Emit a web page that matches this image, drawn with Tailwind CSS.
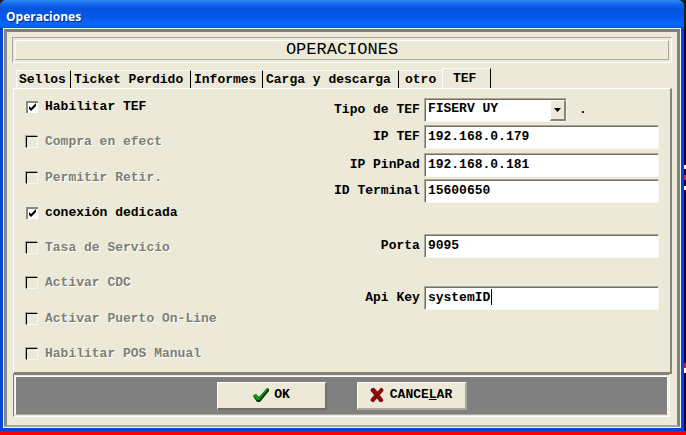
<!DOCTYPE html>
<html lang="es">
<head>
<meta charset="utf-8">
<title>Operaciones</title>
<script src="https://cdn.jsdelivr.net/npm/@tailwindcss/browser@4"></script>
</head>
<body class="min-h-screen flex flex-col bg-[#f00] pb-1 text-black text-[13px] leading-4 font-bold font-['Liberation_Mono',monospace]">
<div class="grow flex flex-col pr-[2px] bg-[linear-gradient(#1c1c10_0_30px,#04045c_30px_165px,#fff_165px_169px,#04045c_169px_175px,#b03060_175px_180px,#04045c_180px_186px,#fff_186px_190px,#04045c_190px_363px,#a02060_363px_368px,#fff_368px_373px,#04045c_373px)]">
  <div class="grow flex flex-col bg-[#0a44d4] px-1 pb-1 rounded-t-md">
    <header class="-mx-1 h-[29px] flex items-center pl-[6px] pt-1 rounded-t-md bg-[linear-gradient(#2f8cf8_0,#1567ee_4px,#0453dd_9px,#0459ea_17px,#0866fc_24px,#0460f4_27px,#0340c0_29px)]">
      <h1 class="text-white text-[12px] font-['Open_Sans',sans-serif] [text-shadow:1px_1px_0_#0a2a80]">Operaciones</h1>
    </header>
    <main class="grow flex flex-col bg-[#ece9d8] border-t-3 border-x-3 border-b-2 border-t-[#7c8084] border-l-[#84888c] border-r-[#84827c] border-b-[#aca899] outline outline-[#f4f4ee] pt-[5px] px-[5px] pb-2">
      <div class="border border-[#aca899] border-r-white border-b-white p-[2px] h-[26px]">
        <h2 class="h-full border border-white border-r-[#aca899] border-b-[#aca899] flex items-center justify-center text-[17px] leading-4 font-normal">OPERACIONES</h2>
      </div>
      <div role="tablist" class="flex items-end h-[25px] pl-1 shrink-0">
        <button role="tab" class="h-[18px] w-[55px] pl-[2px] text-left whitespace-nowrap border-t border-l border-r border-t-white border-l-white border-r-black">Sellos</button>
        <button role="tab" class="h-[18px] w-[120px] pl-[3px] text-left whitespace-nowrap border-t border-r border-t-white border-r-black">Ticket Perdido</button>
        <button role="tab" class="h-[18px] w-[72px] pl-[3px] text-left whitespace-nowrap border-t border-r border-t-white border-r-black">Informes</button>
        <button role="tab" class="h-[18px] w-[136px] pl-[3px] text-left whitespace-nowrap border-t border-r border-t-white border-r-black">Carga y descarga</button>
        <button role="tab" class="h-[18px] w-[43px] pl-[6px] text-left whitespace-nowrap border-t border-t-white">otro</button>
        <button role="tab" aria-selected="true" class="-mb-px h-[21px] w-[49px] pl-[10px] text-left whitespace-nowrap bg-[#ece9d8] border-t border-l border-r border-t-white border-l-white border-r-black">TEF</button>
      </div>
      <section role="tabpanel" class="grow flex border border-t-white border-l-white border-r-2 border-b-2 border-r-[#86837a] border-b-[#86837a] ml-px">
        <div class="flex flex-col justify-between pt-[10px] pb-[10px] pl-3 w-[48%]">
          <label class="flex items-center gap-[7px]"><span class="grid size-3"><input type="checkbox" checked class="peer [grid-area:1/1] appearance-none size-3 bg-white border-t-2 border-l-2 border-t-[#8a887c] border-l-[#8a887c]"><svg viewBox="0 0 12 12" class="[grid-area:1/1] size-3 pointer-events-none invisible peer-checked:visible" aria-hidden="true"><path d="M3 5v3l2 2 5-5V2L5 7z"/></svg></span>Habilitar TEF</label>
          <label class="flex items-center gap-[7px] text-[#807e74] [text-shadow:1px_1px_0_#fff]"><input type="checkbox" disabled class="appearance-none size-3 border border-t-black border-l-black border-r-[#f8f7f0] border-b-[#f8f7f0] shadow-[-1px_-1px_0_#aca899]">Compra en efect</label>
          <label class="flex items-center gap-[7px] text-[#807e74] [text-shadow:1px_1px_0_#fff]"><input type="checkbox" disabled class="appearance-none size-3 border border-t-black border-l-black border-r-[#f8f7f0] border-b-[#f8f7f0] shadow-[-1px_-1px_0_#aca899]">Permitir Retir.</label>
          <label class="flex items-center gap-[7px]"><span class="grid size-3"><input type="checkbox" checked class="peer [grid-area:1/1] appearance-none size-3 bg-white border-t-2 border-l-2 border-t-[#8a887c] border-l-[#8a887c]"><svg viewBox="0 0 12 12" class="[grid-area:1/1] size-3 pointer-events-none invisible peer-checked:visible" aria-hidden="true"><path d="M3 5v3l2 2 5-5V2L5 7z"/></svg></span>conexión dedicada</label>
          <label class="flex items-center gap-[7px] text-[#807e74] [text-shadow:1px_1px_0_#fff]"><input type="checkbox" disabled class="appearance-none size-3 border border-t-black border-l-black border-r-[#f8f7f0] border-b-[#f8f7f0] shadow-[-1px_-1px_0_#aca899]">Tasa de Servicio</label>
          <label class="flex items-center gap-[7px] text-[#807e74] [text-shadow:1px_1px_0_#fff]"><input type="checkbox" disabled class="appearance-none size-3 border border-t-black border-l-black border-r-[#f8f7f0] border-b-[#f8f7f0] shadow-[-1px_-1px_0_#aca899]">Activar CDC</label>
          <label class="flex items-center gap-[7px] text-[#807e74] [text-shadow:1px_1px_0_#fff]"><input type="checkbox" disabled class="appearance-none size-3 border border-t-black border-l-black border-r-[#f8f7f0] border-b-[#f8f7f0] shadow-[-1px_-1px_0_#aca899]">Activar Puerto On-Line</label>
          <label class="flex items-center gap-[7px] text-[#807e74] [text-shadow:1px_1px_0_#fff]"><input type="checkbox" disabled class="appearance-none size-3 border border-t-black border-l-black border-r-[#f8f7f0] border-b-[#f8f7f0] shadow-[-1px_-1px_0_#aca899]">Habilitar POS Manual</label>
        </div>
        <form id="tef" class="grow pt-[9px] pr-[11px] flex flex-col">
          <div class="flex items-center gap-1">
            <label for="tipo" class="w-[91px] text-right">Tipo de TEF</label>
            <div class="relative w-[143px]">
              <select id="tipo" class="block appearance-none w-full h-6 pl-[3px] pb-[2px] bg-white border border-t-[#aca899] border-l-[#aca899] border-r-[#f8f7f0] border-b-[#f8f7f0] shadow-[inset_1px_1px_0_#716f64]"><option>FISERV UY</option></select>
              <span class="absolute right-px top-[2px] bottom-px w-4 bg-[#ece9d8] border border-t-white border-l-white border-r-2 border-b-2 border-r-[#86837a] border-b-[#86837a] flex items-center justify-center pointer-events-none"><svg viewBox="0 0 7 4" class="w-[7px] h-1" aria-hidden="true"><path d="M0 0h7L3.500 4z"/></svg></span>
            </div>
            <span class="pl-2">.</span>
          </div>
          <div class="flex items-center gap-1 mt-[3px]">
            <label for="iptef" class="w-[91px] text-right">IP TEF</label>
            <input id="iptef" value="192.168.0.179" class="grow min-w-0 h-6 pl-[3px] pb-[2px] bg-white border border-t-[#aca899] border-l-[#aca899] border-r-[#f8f7f0] border-b-[#f8f7f0] shadow-[inset_1px_1px_0_#716f64]">
          </div>
          <div class="flex items-center gap-1 mt-[4px]">
            <label for="pinpad" class="w-[91px] text-right">IP PinPad</label>
            <input id="pinpad" value="192.168.0.181" class="grow min-w-0 h-6 pl-[3px] pb-[2px] bg-white border border-t-[#aca899] border-l-[#aca899] border-r-[#f8f7f0] border-b-[#f8f7f0] shadow-[inset_1px_1px_0_#716f64]">
          </div>
          <div class="flex items-center gap-1 mt-[2px]">
            <label for="terminal" class="w-[91px] text-right">ID Terminal</label>
            <input id="terminal" value="15600650" class="grow min-w-0 h-6 pl-[3px] pb-[2px] bg-white border border-t-[#aca899] border-l-[#aca899] border-r-[#f8f7f0] border-b-[#f8f7f0] shadow-[inset_1px_1px_0_#716f64]">
          </div>
          <div class="flex items-center gap-1 mt-[31px]">
            <label for="porta" class="w-[91px] text-right">Porta</label>
            <input id="porta" value="9095" class="grow min-w-0 h-6 pl-[3px] pb-[2px] bg-white border border-t-[#aca899] border-l-[#aca899] border-r-[#f8f7f0] border-b-[#f8f7f0] shadow-[inset_1px_1px_0_#716f64]">
          </div>
          <div class="flex items-center gap-1 mt-[28px]">
            <label for="apikey" class="w-[91px] text-right">Api Key</label>
            <div class="relative grow flex">
              <input id="apikey" value="systemID" class="grow min-w-0 h-6 pl-[3px] pb-[2px] bg-white border border-t-[#aca899] border-l-[#aca899] border-r-[#f8f7f0] border-b-[#f8f7f0] shadow-[inset_1px_1px_0_#716f64]">
              <span class="absolute left-[67px] top-[3px] h-4 w-px bg-black"></span>
            </div>
          </div>
        </form>
      </section>
      <footer class="shrink-0 h-[43px] ml-px mr-[2px] border border-[#86837a] border-r-white border-b-white p-px bg-[#ece9d8]">
        <div class="h-full border border-white border-r-white border-b-[#aca899] bg-[#808080] flex items-center justify-center gap-[30px]">
          <button type="submit" form="tef" class="h-7 w-[110px] flex items-center justify-center gap-1 bg-[#ece9d8] border border-t-white border-l-white border-r-2 border-b-2 border-r-[#716f64] border-b-[#716f64]">
            <svg viewBox="0 0 18 16" class="w-[18px] h-4" aria-hidden="true"><path d="M1 9l3-2 3 3 8-9 2 1v2L8 15H5z" fill="#063806"/><path d="M1 8l3-1 3 4 8-10 1 1-9 11H5z" fill="#10a018"/></svg>OK</button>
          <button type="button" class="h-7 w-[110px] flex items-center justify-center gap-[6px] bg-[#ece9d8] border border-t-white border-l-white border-r-2 border-b-2 border-r-[#aca899] border-b-[#aca899]">
            <svg viewBox="0 0 14 16" class="w-[14px] h-4" aria-hidden="true"><path d="M1 2l3-1 3.500 4L11 1l2 1v2L9.500 8l3 4 .5 2-3 1-3-4-3.500 4L1 14v-2l3.500-4L1 4z" fill="#8a0808" stroke="#700404" stroke-width=".6"/></svg><span>CANCE<u>L</u>AR</span></button>
        </div>
      </footer>
    </main>
  </div>
</div>
</body>
</html>
